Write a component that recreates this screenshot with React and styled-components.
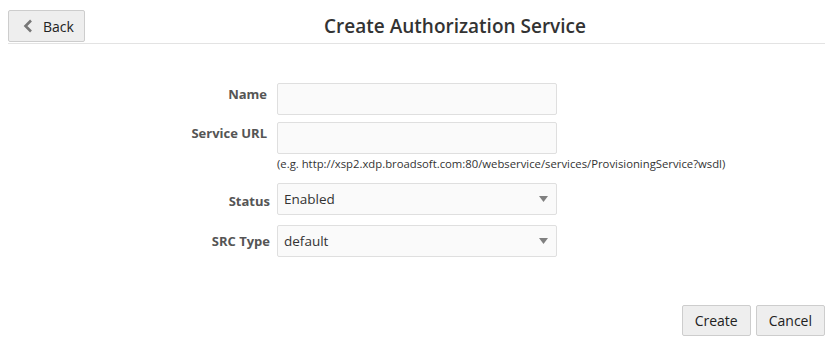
import styled, { createGlobalStyle } from 'styled-components';

const GlobalStyle = createGlobalStyle`
  body {
    margin: 8px;
    background: #fff;
    font-family: "Open Sans", "Noto Sans", sans-serif;
    color: #333;
  }
`;

const ChevronLeft = () => (
  <svg width="10" height="14" viewBox="0 0 10 14">
    <path d="M8 1.5 L2.5 7 L8 12.5" fill="none" stroke="#777" strokeWidth="2.6" />
  </svg>
);

const CaretDown = () => (
  <svg width="9" height="6" viewBox="0 0 9 6">
    <path d="M0 0 H9 L4.5 6 Z" fill="#808080" />
  </svg>
);

const App = () => {
  return (
    <>
      <GlobalStyle />
      <Header>
        <Button className="back">
          <ChevronLeft />
          <span>Back</span>
        </Button>
        <Title>Create Authorization Service</Title>
      </Header>

      <Form>
        <Label $pad>Name</Label>
        <Field>
          <TextInput />
        </Field>

        <Label $pad>Service URL</Label>
        <Field>
          <TextInput />
          <Hint>(e.g. http://xsp2.xdp.broadsoft.com:80/webservice/services/ProvisioningService?wsdl)</Hint>
        </Field>

        <Label $center>Status</Label>
        <Field $space={3}>
          <Select>
            <span>Enabled</span>
            <CaretDown />
          </Select>
        </Field>

        <Label $center>SRC Type</Label>
        <Field>
          <Select>
            <span>default</span>
            <CaretDown />
          </Select>
        </Field>
      </Form>

      <Footer>
        <Button>Create</Button>
        <Button>Cancel</Button>
      </Footer>
    </>
  );
};

const Header = styled.div`
  display: flex;
  align-items: center;
  padding: 2px 0 1px;
  border-bottom: 1px solid #e3e3e3;
`;

const Button = styled.button`
  display: flex;
  align-items: center;
  justify-content: center;
  height: 32px;
  padding: 0 13px;
  border: 1px solid #cdcdcd;
  border-radius: 2px;
  background: #eeeeee;
  font-family: inherit;
  font-size: 14px;
  color: #222;
  cursor: pointer;

  &.back {
    width: 77px;
    padding: 0 0 0 14px;
    justify-content: flex-start;
    gap: 10px;
  }
`;

const Title = styled.h1`
  flex: 1;
  margin: 0;
  text-align: center;
  font-size: 19px;
  font-weight: 600;
  color: #333;
`;

const Form = styled.div`
  display: grid;
  grid-template-columns: 262px 280px;
  column-gap: 7px;
  row-gap: 7px;
  margin-top: 39px;
`;

const Label = styled.div`
  display: flex;
  justify-content: flex-end;
  align-items: ${p => (p.$center ? 'center' : 'flex-start')};
  padding-top: ${p => (p.$center ? '0' : '2px')};
  padding-right: ${p => (p.$pad ? '3px' : '0')};
  font-size: 13px;
  font-weight: 700;
  color: #555;
`;

const Field = styled.div`
  display: flex;
  flex-direction: column;
  margin-bottom: ${p => p.$space || 0}px;
`;

const TextInput = styled.input`
  box-sizing: border-box;
  width: 280px;
  height: 32px;
  border: 1px solid #dfdfdf;
  border-radius: 2px;
  background: #fafafa;
`;

const Hint = styled.div`
  margin: 2px 0 5px;
  font-size: 11.3px;
  color: #333;
  white-space: nowrap;
`;

const Select = styled.div`
  box-sizing: border-box;
  display: flex;
  align-items: center;
  justify-content: space-between;
  width: 280px;
  height: 32px;
  padding: 0 6px 0 6px;
  border: 1px solid #dfdfdf;
  border-radius: 2px;
  background: #fafafa;
  font-size: 13.5px;
  color: #333;

  svg {
    margin-right: 2px;
  }
`;

const Footer = styled.div`
  display: flex;
  justify-content: flex-end;
  gap: 5px;
  margin-top: 48px;

  ${Button} {
    height: 31px;
    padding: 0 12px;
  }
`;

export default App;
